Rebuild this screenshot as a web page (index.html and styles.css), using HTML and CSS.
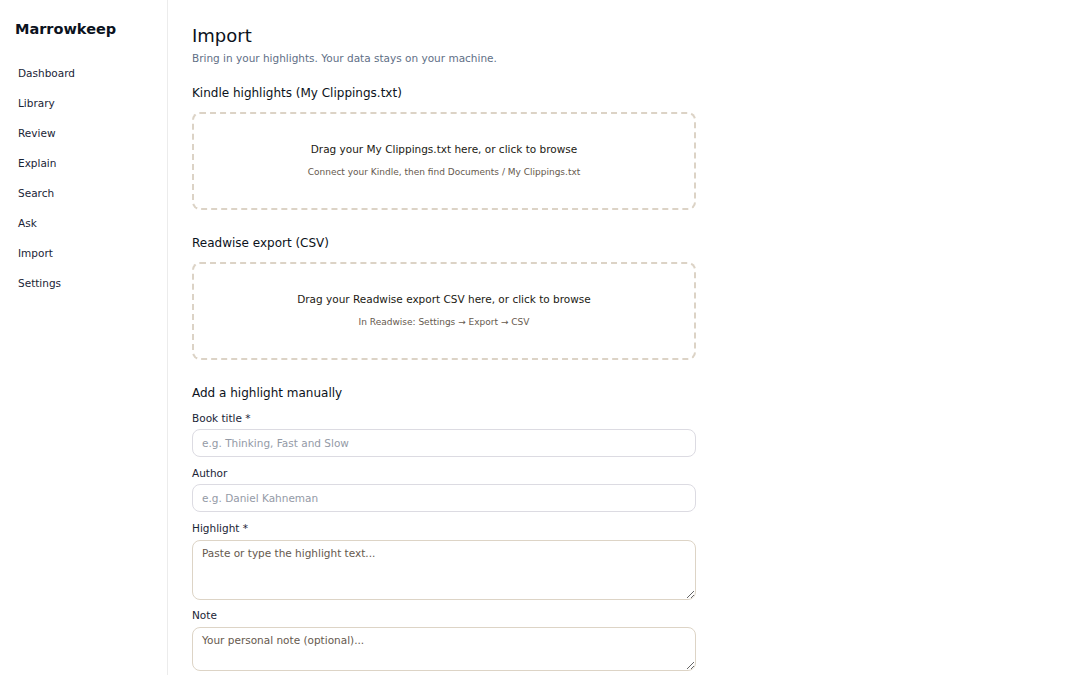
FILE: index.html
```html
<!DOCTYPE html>
<html lang="en">
<head>
    <meta charset="UTF-8">
    <meta name="viewport" content="width=device-width, initial-scale=1.0">
    <link rel="stylesheet" href="styles.css">
    <title>Marrowkeep - Import</title>
</head>
<body>
    <aside class="lateral">
        <div class="marca">Marrowkeep</div>
        <nav class="menu">
            <a href="#">Dashboard</a>
            <a href="#">Library</a>
            <a href="#">Review</a>
            <a href="#">Explain</a>
            <a href="#">Search</a>
            <a href="#">Ask</a>
            <a href="#">Import</a>
            <a href="#">Settings</a>
        </nav>
    </aside>
    <main class="conteudo">
        <h1>Import</h1>
        <p class="subtitulo">Bring in your highlights. Your data stays on your machine.</p>

        <section class="secao">
            <h2>Kindle highlights (My Clippings.txt)</h2>
            <div class="soltar">
                <p class="soltar-titulo">Drag your My Clippings.txt here, or click to browse</p>
                <p class="soltar-dica">Connect your Kindle, then find Documents / My Clippings.txt</p>
            </div>
        </section>

        <section class="secao">
            <h2>Readwise export (CSV)</h2>
            <div class="soltar">
                <p class="soltar-titulo">Drag your Readwise export CSV here, or click to browse</p>
                <p class="soltar-dica">In Readwise: Settings &rarr; Export &rarr; CSV</p>
            </div>
        </section>

        <section class="secao manual">
            <h2>Add a highlight manually</h2>
            <div class="campo">
                <label>Book title *</label>
                <input type="text" placeholder="e.g. Thinking, Fast and Slow">
            </div>
            <div class="campo">
                <label>Author</label>
                <input type="text" placeholder="e.g. Daniel Kahneman">
            </div>
            <div class="campo campo-texto">
                <label>Highlight *</label>
                <textarea class="alto" placeholder="Paste or type the highlight text..."></textarea>
            </div>
            <div class="campo campo-texto">
                <label>Note</label>
                <textarea class="baixo" placeholder="Your personal note (optional)..."></textarea>
            </div>
        </section>
    </main>
</body>
</html>
```

FILE: styles.css
```css
body, html {
    margin: 0;
    padding: 0;
    height: 100%;
    background-color: #fff;
    font-family: "DejaVu Sans", sans-serif;
    color: #1e293b;
}

body {
    display: flex;
    overflow: hidden;
}

.lateral {
    width: 168px;
    flex-shrink: 0;
    border-right: 1px solid #ececec;
    padding: 20px 0 0 15px;
    box-sizing: border-box;
}

.marca {
    font-size: 14.5px;
    font-weight: bold;
    line-height: 18px;
    color: #0b1220;
    margin-bottom: 20px;
}

.menu {
    display: flex;
    flex-direction: column;
}

.menu a {
    font-size: 10.5px;
    line-height: 14px;
    padding: 8px 3px;
    color: #1a2436;
    text-decoration: none;
}

.conteudo {
    padding: 25px 24px 0 24px;
    width: 504px;
}

h1 {
    font-size: 18px;
    font-weight: normal;
    line-height: 22px;
    margin: 0;
    color: #0b1220;
}

.subtitulo {
    font-size: 10.5px;
    line-height: 13px;
    margin: 5px 0 0 0;
    color: #5f6f86;
}

.secao {
    margin-top: 20px;
}

.secao + .secao {
    margin-top: 25px;
}

h2 {
    font-size: 12px;
    font-weight: normal;
    line-height: 16px;
    margin: 0 0 11px 0;
    color: #0b1220;
}

.soltar {
    height: 98px;
    box-sizing: border-box;
    border: 2px dashed #dcd3c6;
    border-radius: 8px;
    display: flex;
    flex-direction: column;
    align-items: center;
    padding-top: 28px;
    cursor: pointer;
}

.soltar p {
    margin: 0;
}

.soltar-titulo {
    font-size: 10.5px;
    line-height: 15px;
    color: #221a13;
}

.soltar-dica {
    font-size: 9px;
    line-height: 12px;
    margin-top: 9px !important;
    color: #66594e;
}

.manual h2 {
    margin-bottom: 10px;
}

.campo {
    display: flex;
    flex-direction: column;
    margin-bottom: 9px;
}

.campo-texto {
    margin-bottom: 8px;
}

.campo label {
    font-size: 10.5px;
    line-height: 14px;
    margin-bottom: 4px;
    color: #1a2436;
}

input, textarea {
    font-family: "DejaVu Sans", sans-serif;
    font-size: 10.5px;
    box-sizing: border-box;
    width: 100%;
    border-radius: 8px;
    padding: 6px 9px;
    outline: none;
}

input {
    height: 28px;
    border: 1px solid #dcdbe2;
    color: #1e293b;
}

input::placeholder {
    color: #949aa6;
}

textarea {
    margin-top: 1px;
    border: 1px solid #ddd4c6;
    color: #2a2119;
    resize: vertical;
}

textarea::placeholder {
    color: #66594e;
}

.alto {
    height: 60px;
}

.baixo {
    height: 44px;
}
```
